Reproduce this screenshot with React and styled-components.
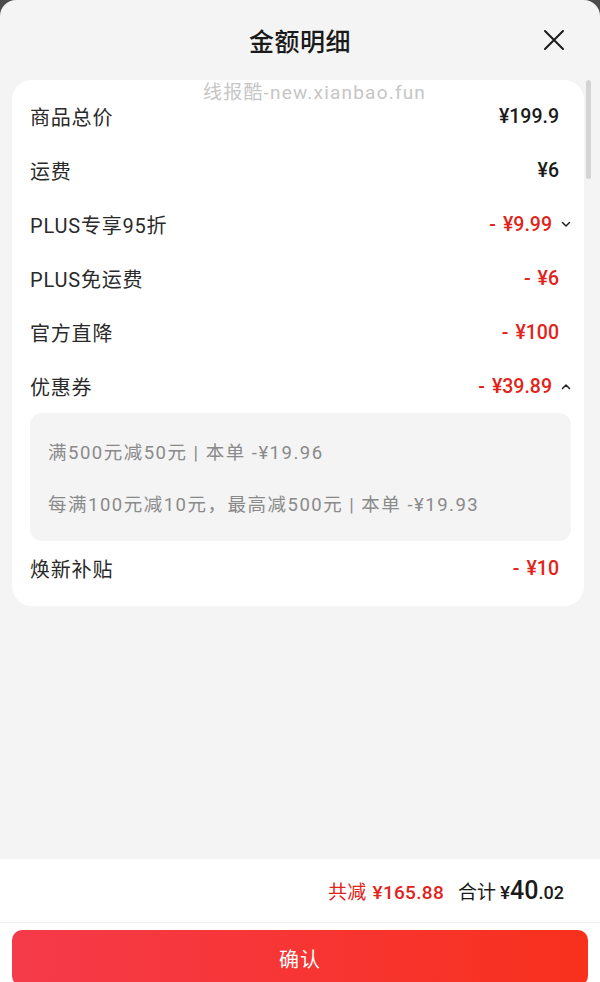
import React from 'react';
import styled, { createGlobalStyle } from 'styled-components';

const GlobalStyle = createGlobalStyle`
  html, body {
    margin: 0;
    padding: 0;
    background: #4b4b4b;
    overflow: hidden;
  }
  body {
    font-family: Roboto, "Noto Sans CJK SC", sans-serif;
  }
`;

const Sheet = styled.div`
  height: 986px;
  background: #f4f4f4;
  border-radius: 16px 16px 0 0;
  display: flex;
  flex-direction: column;
  overflow: hidden;
`;

const Header = styled.div`
  height: 80px;
  display: flex;
  align-items: center;
  justify-content: center;
  position: relative;
  flex-shrink: 0;
`;

const Title = styled.div`
  font-family: "Noto Sans CJK SC", sans-serif;
  font-size: 25px;
  font-weight: 500;
  color: #1a1a1a;
  letter-spacing: 0.5px;
`;

const CloseButton = styled.button`
  position: absolute;
  right: 34px;
  top: 28px;
  width: 24px;
  height: 24px;
  padding: 0;
  border: none;
  background: none;
  display: flex;
  align-items: center;
  justify-content: center;
`;

const Body = styled.div`
  flex: 1;
  position: relative;
  padding: 0 16px 0 12px;
`;

const Watermark = styled.div`
  position: absolute;
  top: -3px;
  left: 203px;
  font-family: Roboto, "Noto Sans CJK SC", sans-serif;
  font-size: 19px;
  color: #c6c6c6;
  letter-spacing: 1.2px;
  z-index: 2;
  pointer-events: none;
`;

const ScrollThumb = styled.div`
  position: absolute;
  right: 9px;
  top: 0;
  width: 5px;
  height: 99px;
  border-radius: 3px;
  background: #d4d4d4;
`;

const Card = styled.div`
  background: #fff;
  border-radius: 20px;
  padding: 9px 13px 11px 18px;
`;

const Row = styled.div`
  height: 54px;
  display: flex;
  align-items: center;
  justify-content: space-between;
`;

const Label = styled.span`
  font-family: Roboto, "Noto Sans CJK SC", sans-serif;
  font-size: 20px;
  color: #2a2a2a;
  letter-spacing: 0.8px;
`;

const ValueWrap = styled.div`
  display: flex;
  align-items: center;
  gap: 9px;
  padding-right: ${p => (p.$chevron ? 0 : 12)}px;
`;

const Value = styled.span`
  font-family: Roboto, "Noto Sans CJK SC", sans-serif;
  font-size: 19.5px;
  font-weight: 500;
  color: ${p => (p.$discount ? '#e2231a' : '#1a1a1a')};
  display: flex;
  align-items: center;
`;

const Minus = styled.span`
  margin-right: 7px;
`;

const CouponBox = styled.div`
  background: #f4f4f4;
  border-radius: 12px;
  padding: 12px 18px;
`;

const CouponLine = styled.div`
  height: 52px;
  display: flex;
  align-items: center;
  font-family: Roboto, "Noto Sans CJK SC", sans-serif;
  font-size: 18.5px;
  letter-spacing: 1.5px;
  color: #8a8a8a;
  white-space: pre;
`;

const Summary = styled.div`
  height: 63px;
  background: #fff;
  display: flex;
  align-items: center;
  justify-content: flex-end;
  padding-right: 36px;
  border-bottom: 1px solid #efefef;
  flex-shrink: 0;
`;

const Saved = styled.span`
  font-family: "Noto Sans CJK SC", sans-serif;
  font-size: 19px;
  color: #e2231a;
  margin-right: 14px;
  letter-spacing: 0.3px;
  b {
    font-family: Roboto, sans-serif;
    font-weight: 500;
    margin-left: 6px;
  }
`;

const Total = styled.span`
  font-family: "Noto Sans CJK SC", sans-serif;
  font-size: 19px;
  color: #1a1a1a;
  display: flex;
  align-items: baseline;
`;

const TotalNum = styled.span`
  font-family: Roboto, sans-serif;
  font-weight: 500;
  font-size: ${p => p.$size}px;
  margin-left: ${p => p.$gap || 0}px;
`;

const Footer = styled.div`
  background: #fff;
  padding: 7px 12px 0;
  flex-shrink: 0;
`;

const ConfirmButton = styled.button`
  width: 100%;
  height: 56px;
  border: none;
  border-radius: 10px;
  background: linear-gradient(90deg, #f53a4a 0%, #f7342f 60%, #f8311d 100%);
  color: #fff;
  font-family: "Noto Sans CJK SC", sans-serif;
  font-size: 20px;
  font-weight: 400;
  letter-spacing: 1px;
`;

const Chevron = ({ up }) => (
  <svg width="10" height="7" viewBox="0 0 10 7" fill="none">
    <path
      d={up ? 'M1.5 5.5 L5 2 L8.5 5.5' : 'M1.5 1.5 L5 5 L8.5 1.5'}
      stroke="#222"
      strokeWidth="1.5"
      strokeLinecap="round"
      strokeLinejoin="round"
    />
  </svg>
);

const items = [
  { label: '商品总价', value: '¥199.9' },
  { label: '运费', value: '¥6' },
  { label: 'PLUS专享95折', value: '¥9.99', discount: true, chevron: 'down' },
  { label: 'PLUS免运费', value: '¥6', discount: true },
  { label: '官方直降', value: '¥100', discount: true },
  { label: '优惠券', value: '¥39.89', discount: true, chevron: 'up' },
];

const coupons = [
  '满500元减50元 | 本单 -¥19.96',
  '每满100元减10元，最高减500元 | 本单 -¥19.93',
];

const DetailRow = ({ label, value, discount, chevron }) => (
  <Row>
    <Label>{label}</Label>
    <ValueWrap $chevron={!!chevron}>
      <Value $discount={discount}>
        {discount && <Minus>-</Minus>}
        {value}
      </Value>
      {chevron && <Chevron up={chevron === 'up'} />}
    </ValueWrap>
  </Row>
);

export default function App() {
  return (
    <>
      <GlobalStyle />
      <Sheet>
        <Header>
          <Title>金额明细</Title>
          <CloseButton aria-label="关闭">
            <svg width="22" height="22" viewBox="0 0 22 22">
              <path d="M2 2 L20 20 M20 2 L2 20" stroke="#1a1a1a" strokeWidth="2" strokeLinecap="round" />
            </svg>
          </CloseButton>
        </Header>
        <Body>
          <Watermark>线报酷-new.xianbao.fun</Watermark>
          <ScrollThumb />
          <Card>
            {items.map(it => (
              <DetailRow key={it.label} {...it} />
            ))}
            <CouponBox>
              {coupons.map(c => (
                <CouponLine key={c}>{c}</CouponLine>
              ))}
            </CouponBox>
            <DetailRow label="焕新补贴" value="¥10" discount />
          </Card>
        </Body>
        <Summary>
          <Saved>共减<b>¥165.88</b></Saved>
          <Total>
            合计
            <TotalNum $size={19} $gap={4}>¥</TotalNum>
            <TotalNum $size={25}>40</TotalNum>
            <TotalNum $size={18}>.02</TotalNum>
          </Total>
        </Summary>
        <Footer>
          <ConfirmButton>确认</ConfirmButton>
        </Footer>
      </Sheet>
    </>
  );
}
